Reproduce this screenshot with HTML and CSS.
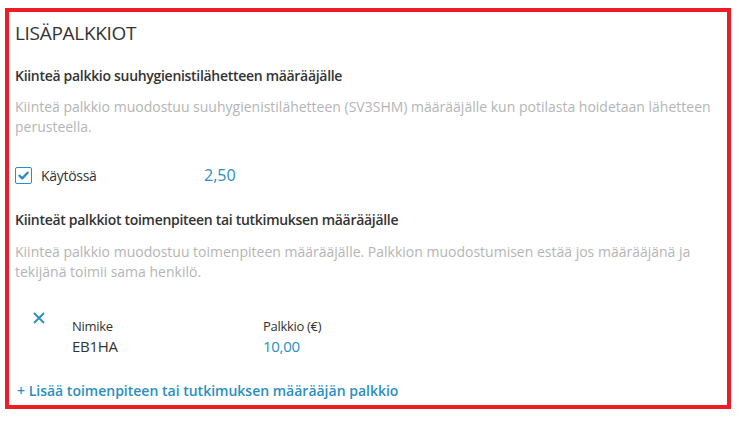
FILE: index.html
```html
<!DOCTYPE html>
<html lang="fi">
<head>
    <meta charset="UTF-8">
    <meta name="viewport" content="width=device-width, initial-scale=1.0">
    <title>Lisäpalkkiot</title>
    <link rel="stylesheet" href="styles.css">
</head>
<body>
    <div class="panel">
        <h2 class="panel-title">LISÄPALKKIOT</h2>

        <div class="section">
            <h3>Kiinteä palkkio suuhygienistilähetteen määrääjälle</h3>
            <p class="hint">Kiinteä palkkio muodostuu suuhygienistilähetteen (SV3SHM) määrääjälle kun potilasta hoidetaan lähetteen perusteella.</p>
            <div class="check-row">
                <label class="check">
                    <span class="box">
                        <svg width="13" height="13" viewBox="0 0 13 13"><path d="M2.4 6.7 L5.3 9.4 L10.6 3.7" fill="none" stroke="#2a8ec4" stroke-width="2.3" stroke-linecap="round" stroke-linejoin="round"/></svg>
                    </span>
                    Käytössä
                </label>
                <span class="amount">2,50</span>
            </div>
        </div>

        <div class="section">
            <h3>Kiinteät palkkiot toimenpiteen tai tutkimuksen määrääjälle</h3>
            <p class="hint">Kiinteä palkkio muodostuu toimenpiteen määrääjälle. Palkkion muodostumisen estää jos määrääjänä ja tekijänä toimii sama henkilö.</p>

            <div class="fee-row">
                <button class="remove" title="Poista">
                    <svg width="12" height="12" viewBox="0 0 12 12"><path d="M1 1 L11 11 M11 1 L1 11" stroke="#2a8ec4" stroke-width="1.8"/></svg>
                </button>
                <div class="field">
                    <span class="label">Nimike</span>
                    <span class="value">EB1HA</span>
                </div>
                <div class="field">
                    <span class="label">Palkkio (€)</span>
                    <span class="value blue">10,00</span>
                </div>
            </div>

            <a href="#" class="add-link">+ Lisää toimenpiteen tai tutkimuksen määrääjän palkkio</a>
        </div>
    </div>
</body>
</html>
```

FILE: styles.css
```css
/* Perustyylit */
body {
    margin: 0;
    font-family: "Open Sans", Arial, sans-serif;
    color: #333;
    background: #fff;
}
.panel {
    box-sizing: border-box;
    width: 726px;
    height: 401px;
    margin: 8px 0 0 5px;
    padding: 8px 6px 0 6px;
    border: 4px solid #ee1c25;
}
.panel-title {
    margin: 0;
    font-size: 19px;
    font-weight: 400;
    line-height: 26px;
    letter-spacing: -0.3px;
    color: #333;
}
.section h3 {
    margin: 0;
    font-size: 14px;
    font-weight: 600;
    line-height: 20px;
    letter-spacing: -0.3px;
    color: #333;
}
.section:first-of-type h3 {
    margin-top: 20px;
}
.hint {
    margin: 11px 0 0 0;
    font-size: 14px;
    line-height: 20px;
    letter-spacing: 0;
    color: #b5b5b5;
}
.check-row {
    display: flex;
    align-items: center;
    margin-top: 28px;
    height: 20px;
}
.check {
    display: flex;
    align-items: center;
    gap: 9px;
    width: 189px;
    font-size: 14px;
    letter-spacing: -0.3px;
    color: #333;
}
.box {
    box-sizing: border-box;
    display: flex;
    align-items: center;
    justify-content: center;
    width: 17px;
    height: 17px;
    border: 1px solid #2a8ec4;
    border-radius: 2px;
}
.amount {
    font-size: 16px;
    color: #2a8ec4;
}
.section + .section h3 {
    margin-top: 25px;
}
.section + .section .hint {
    margin-top: 12px;
}
.fee-row {
    display: flex;
    align-items: flex-start;
    margin-top: 30px;
    padding-left: 18px;
}
.remove {
    width: 39px;
    padding: 0;
    margin: 0;
    border: none;
    background: none;
    text-align: left;
    cursor: pointer;
    line-height: 12px;
}
.field {
    display: flex;
    flex-direction: column;
    width: 191px;
    margin-top: 5px;
}
.label {
    font-size: 13px;
    line-height: 18px;
    letter-spacing: -0.3px;
}
.value {
    font-size: 15px;
    line-height: 22px;
    letter-spacing: -0.3px;
}
.blue {
    color: #2a8ec4;
}
.add-link {
    display: block;
    margin-top: 24px;
    padding-left: 2px;
    font-size: 14px;
    font-weight: 600;
    letter-spacing: 0;
    color: #2a8ec4;
    text-decoration: none;
}
```
